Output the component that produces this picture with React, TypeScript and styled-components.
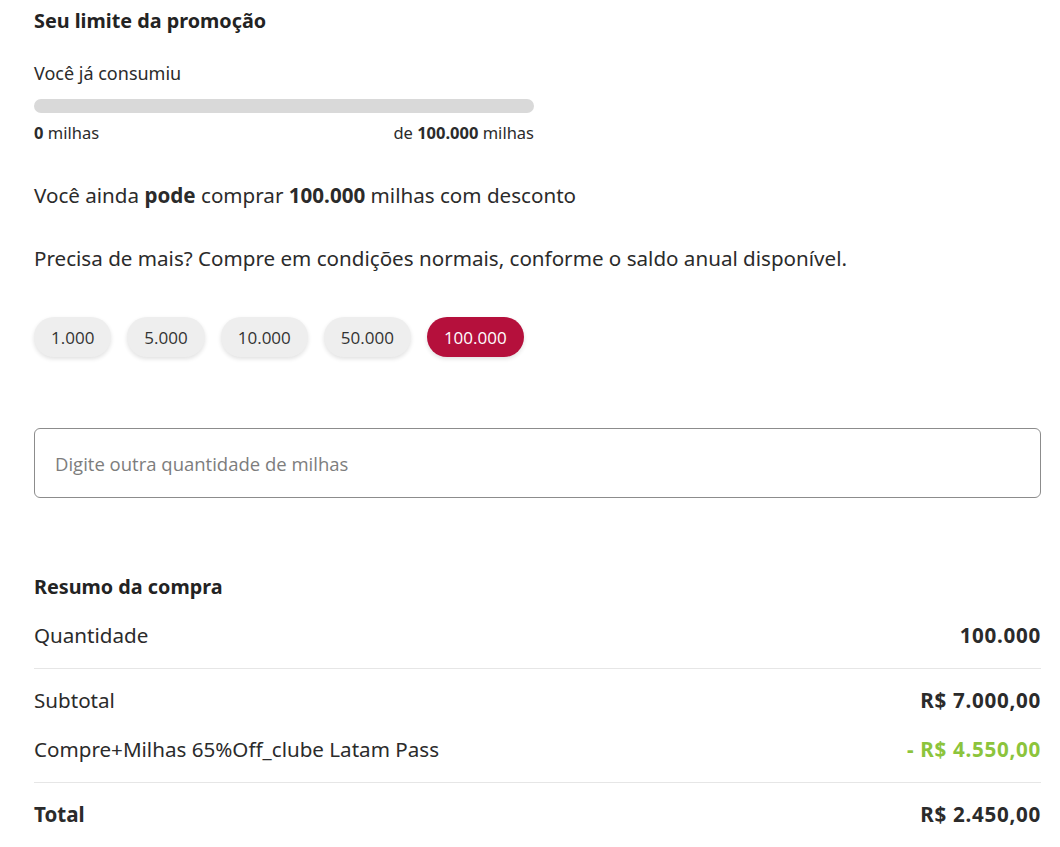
import React from "react";
import styled, { createGlobalStyle } from "styled-components";

const GlobalStyle = createGlobalStyle`
  html, body { margin: 0; padding: 0; background: #ffffff; }
  body { font-family: "Noto Sans", "Open Sans", sans-serif; color: #2b2b2b; }
  * { box-sizing: border-box; }
`;

const Page = styled.div`
  padding: 6px 19px 20px 34px;
  display: flex;
  flex-direction: column;
`;

const Title = styled.h2`
  margin: 0;
  font-size: 19.8px;
  font-weight: 700;
  line-height: 30px;
  color: #232323;
`;

const Label = styled.p`
  margin: 25px 0 0;
  font-size: 18px;
  line-height: 24px;
`;

const Limit = styled.div`
  width: 500px;
  display: flex;
  flex-direction: column;
`;

const Track = styled.div`
  margin-top: 14px;
  height: 14px;
  border-radius: 7px;
  background: #d9d9d9;
  overflow: hidden;
`;

const Fill = styled.div`
  height: 100%;
  background: #b5103c;
`;

const LimitLegend = styled.div`
  margin-top: 9px;
  display: flex;
  justify-content: space-between;
  font-size: 16.5px;
  line-height: 22px;
  b { font-weight: 700; }
`;

const Paragraph = styled.p<{ $top: number }>`
  margin: ${(p) => p.$top}px 0 0;
  font-size: 20.6px;
  line-height: 28px;
  b { font-weight: 700; }
`;

const Chips = styled.div`
  margin-top: 45px;
  display: flex;
  gap: 16px;
`;

const Chip = styled.button<{ $active?: boolean }>`
  height: 40px;
  padding: 0 17px;
  border: none;
  border-radius: 20px;
  font-family: "Open Sans", sans-serif;
  font-size: 17px;
  color: ${(p) => (p.$active ? "#ffffff" : "#333333")};
  background: ${(p) => (p.$active ? "#b5103c" : "#eeeeee")};
  box-shadow: 0 2px 4px rgba(0, 0, 0, 0.12);
  cursor: pointer;
`;

const Input = styled.input`
  margin-top: 71px;
  width: 100%;
  height: 70px;
  padding: 0 20px;
  border: 1px solid #8c8c8c;
  border-radius: 6px;
  font-family: "Open Sans", sans-serif;
  font-size: 18.5px;
  color: #333;
  outline: none;
  &::placeholder { color: #7d7d7d; }
`;

const Summary = styled.section`
  margin-top: 73px;
  display: flex;
  flex-direction: column;
`;

const SummaryTitle = styled.h3`
  margin: 0;
  font-size: 19.8px;
  font-weight: 700;
  line-height: 32px;
  color: #232323;
`;

const Group = styled.div<{ $divider?: boolean }>`
  display: flex;
  flex-direction: column;
  gap: 21px;
  padding: 17px 0 19px;
  border-bottom: ${(p) => (p.$divider ? "1px solid #e6e6e6" : "none")};
  &:first-of-type { padding-top: 18px; }
`;

const Row = styled.div`
  display: flex;
  justify-content: space-between;
  align-items: center;
  font-size: 20.6px;
  line-height: 28px;
`;

const RowLabel = styled.span<{ $bold?: boolean }>`
  font-weight: ${(p) => (p.$bold ? 700 : 400)};
`;

const RowValue = styled.span<{ $tone?: "discount" }>`
  font-weight: 700;
  letter-spacing: 0.7px;
  color: ${(p) => (p.$tone === "discount" ? "#8cc43c" : "#2b2b2b")};
`;

const amounts = ["1.000", "5.000", "10.000", "50.000", "100.000"];

export default function App() {
  const consumed = 0;
  const limit = 100000;
  return (
    <>
      <GlobalStyle />
      <Page>
        <Title>Seu limite da promoção</Title>
        <Limit>
          <Label>Você já consumiu</Label>
          <Track>
            <Fill style={{ width: `${(consumed / limit) * 100}%` }} />
          </Track>
          <LimitLegend>
            <span>
              <b>0</b> milhas
            </span>
            <span>
              de <b>100.000</b> milhas
            </span>
          </LimitLegend>
        </Limit>
        <Paragraph $top={37}>
          Você ainda <b>pode</b> comprar <b>100.000</b> milhas com desconto
        </Paragraph>
        <Paragraph $top={35}>
          Precisa de mais? Compre em condições normais, conforme o saldo anual disponível.
        </Paragraph>
        <Chips>
          {amounts.map((a) => (
            <Chip key={a} $active={a === "100.000"}>
              {a}
            </Chip>
          ))}
        </Chips>
        <Input placeholder="Digite outra quantidade de milhas" />
        <Summary>
          <SummaryTitle>Resumo da compra</SummaryTitle>
          <Group $divider>
            <Row>
              <RowLabel>Quantidade</RowLabel>
              <RowValue>100.000</RowValue>
            </Row>
          </Group>
          <Group $divider>
            <Row>
              <RowLabel>Subtotal</RowLabel>
              <RowValue>R$ 7.000,00</RowValue>
            </Row>
            <Row>
              <RowLabel>Compre+Milhas 65%Off_clube Latam Pass</RowLabel>
              <RowValue $tone="discount">- R$ 4.550,00</RowValue>
            </Row>
          </Group>
          <Group>
            <Row>
              <RowLabel $bold>Total</RowLabel>
              <RowValue>R$ 2.450,00</RowValue>
            </Row>
          </Group>
        </Summary>
      </Page>
    </>
  );
}
